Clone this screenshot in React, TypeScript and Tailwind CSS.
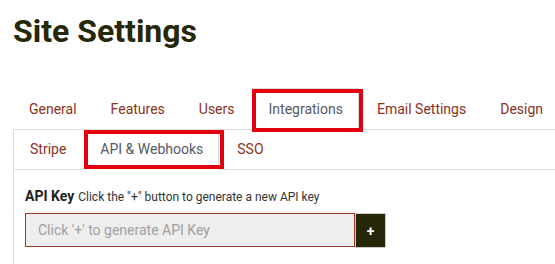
import { useState } from "react";

const mainTabs = ["General", "Features", "Users", "Integrations", "Email Settings", "Design"];
const subTabs = ["Stripe", "API & Webhooks", "SSO"];

export default function App() {
  const [tab, setTab] = useState("Integrations");
  const [sub, setSub] = useState("API & Webhooks");

  return (
    <div className="min-h-screen bg-white pl-[13px] font-['Roboto',sans-serif] overflow-hidden">
      <h1 className="mt-[13px] text-[32px] leading-[36px] font-bold text-[#262608]">Site Settings</h1>

      <ul className="mt-[39px] flex border-b border-[#dddddd] w-[700px]">
        {mainTabs.map((t) => {
          const active = t === tab;
          return (
            <li key={t} className="relative mr-[2px] -mb-px">
              <button
                onClick={() => setTab(t)}
                className={
                  "block px-[15px] py-[10px] text-[14px] leading-5 border " +
                  (active
                    ? "border-[#dddddd] border-b-white bg-white text-[#555a66]"
                    : "border-transparent text-[#8b3222]")
                }
              >
                {t}
              </button>
              {active && (
                <span className="pointer-events-none absolute left-[-1px] right-[-4px] top-px bottom-[-2px] border-4 border-[#e3000f]" />
              )}
            </li>
          );
        })}
      </ul>

      <div className="border-l border-[#dddddd] w-[700px] h-[200px]">
        <ul className="flex border-b border-[#dddddd]">
          {subTabs.map((t) => {
            const active = t === sub;
            return (
              <li key={t} className="relative mr-[2px] -mb-px">
                <button
                  onClick={() => setSub(t)}
                  className={
                    "block px-[15px] pt-[8px] pb-[10px] text-[14px] leading-5 border " +
                    (active
                      ? "border-[#dddddd] border-b-white border-t-transparent bg-white text-[#555a66]"
                      : "border-transparent text-[#8b3222]")
                  }
                >
                  {t}
                </button>
                {active && (
                  <span className="pointer-events-none absolute left-0 right-[-5px] top-0 bottom-px border-4 border-[#e3000f]" />
                )}
              </li>
            );
          })}
        </ul>

        <div className="pl-[11px] pt-[16px]">
          <div className="mb-[6px] leading-5">
            <span className="text-[14px] font-bold text-[#222222]">API Key</span>{" "}
            <span className="text-[12px] text-[#333333]">Click the "+" button to generate a new API key</span>
          </div>
          <div className="flex items-start">
            <input
              readOnly
              placeholder="Click '+' to generate API Key"
              className="w-[330px] h-[34px] px-[12px] bg-[#eeeeee] border border-[#9b3a2a] text-[14px] text-[#555] placeholder:text-[#a0a0a0] outline-none"
            />
            <button className="w-[31px] h-[35px] bg-[#262608] border border-[#cccccc] text-white text-[14px] font-bold leading-none">
              +
            </button>
          </div>
        </div>
      </div>
    </div>
  );
}
